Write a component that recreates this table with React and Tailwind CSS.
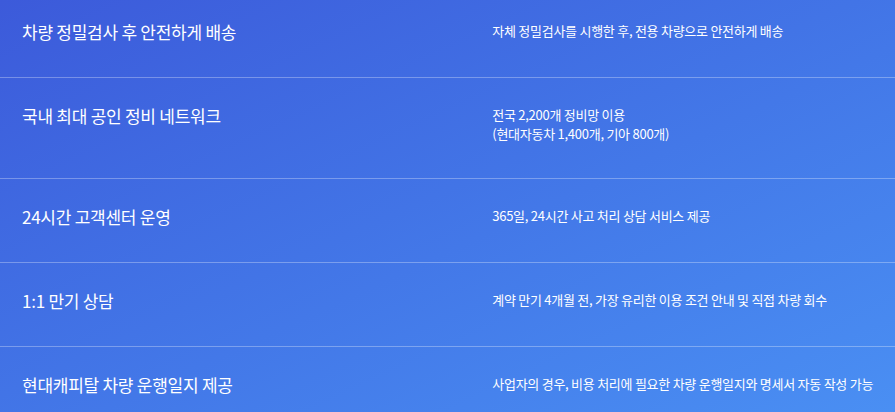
const rows = [
  { title: '차량 정밀검사 후 안전하게 배송', desc: ['자체 정밀검사를 시행한 후, 전용 차량으로 안전하게 배송'] },
  { title: '국내 최대 공인 정비 네트워크', desc: ['전국 2,200개 정비망 이용', '(현대자동차 1,400개, 기아 800개)'] },
  { title: '24시간 고객센터 운영', desc: ['365일, 24시간 사고 처리 상담 서비스 제공'] },
  { title: '1:1 만기 상담', desc: ['계약 만기 4개월 전, 가장 유리한 이용 조건 안내 및 직접 차량 회수'] },
  { title: '현대캐피탈 차량 운행일지 제공', desc: ['사업자의 경우, 비용 처리에 필요한 차량 운행일지와 명세서 자동 작성 가능'] },
]

export default function App() {
  return (
    <div className="h-[412px] w-full overflow-hidden bg-gradient-to-br from-[#3c5ada] to-[#4a8ff3] font-['Noto_Sans_CJK_KR','Noto_Sans',sans-serif] text-white">
      {rows.map((row, i) => (
        <div
          key={i}
          className={`grid grid-cols-[55%_45%] border-b border-white/30 pb-[35px] ${i === 0 ? 'pt-[22px]' : 'pt-[28px]'}`}
        >
          <h3 className="pl-[22px] text-[17px] leading-[20px] font-normal tracking-[-0.015em]">{row.title}</h3>
          <div className="text-[13px] leading-[18.5px] tracking-[-0.02em]">
            {row.desc.map((line) => (
              <p key={line}>{line}</p>
            ))}
          </div>
        </div>
      ))}
    </div>
  )
}
